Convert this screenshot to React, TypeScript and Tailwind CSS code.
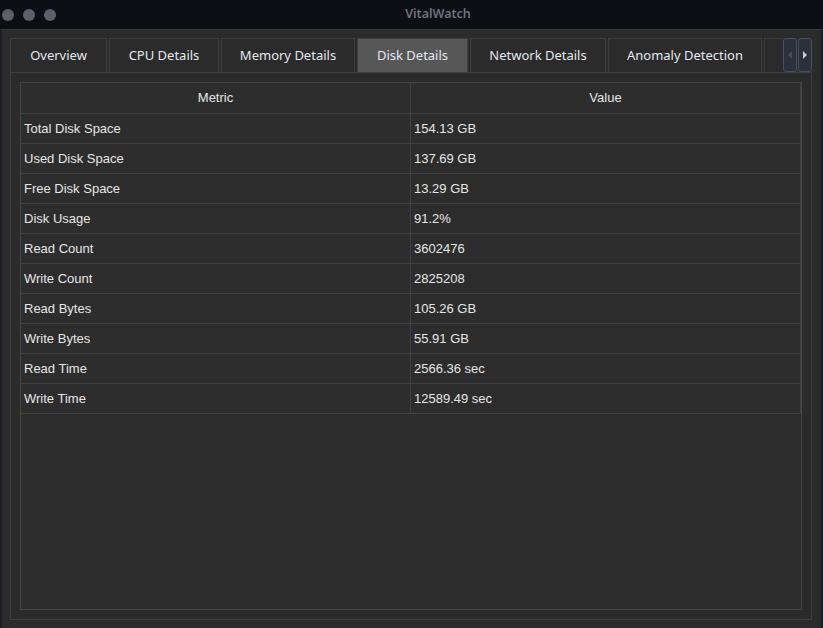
import React from "react";

const tabs = [
  { label: "Overview", w: "w-[97px]" },
  { label: "CPU Details", w: "w-[110px]" },
  { label: "Memory Details", w: "w-[134px]" },
  { label: "Disk Details", w: "w-[111px]", active: true },
  { label: "Network Details", w: "w-[136px]" },
  { label: "Anomaly Detection", w: "w-[154px]" },
  { label: "", w: "w-[60px]" },
];

const rows: [string, string][] = [
  ["Total Disk Space", "154.13 GB"],
  ["Used Disk Space", "137.69 GB"],
  ["Free Disk Space", "13.29 GB"],
  ["Disk Usage", "91.2%"],
  ["Read Count", "3602476"],
  ["Write Count", "2825208"],
  ["Read Bytes", "105.26 GB"],
  ["Write Bytes", "55.91 GB"],
  ["Read Time", "2566.36 sec"],
  ["Write Time", "12589.49 sec"],
];

export default function App() {
  return (
    <div className="w-[823px] h-[628px] flex flex-col bg-[#2b2b2b] overflow-hidden">
      {/* title bar */}
      <div className="h-[29px] shrink-0 bg-[#0d0f15] flex items-center relative">
        <div className="flex gap-[9px] pl-[2px]">
          <span className="w-[12px] h-[12px] rounded-full bg-[#5f5f69]" />
          <span className="w-[12px] h-[12px] rounded-full bg-[#5f5f69]" />
          <span className="w-[12px] h-[12px] rounded-full bg-[#5f5f69]" />
        </div>
        <div className="absolute inset-0 flex items-center justify-center pl-[53px] text-[12.5px] font-semibold text-[#6d7280] font-['Noto_Sans',sans-serif]">
          VitalWatch
        </div>
      </div>

      {/* body */}
      <div className="flex-1 flex flex-col border-t border-[#3a3a3a] border-x-2 border-x-[#1c1d25] pt-[8px] pb-[8px] pl-[8px] pr-[9px]">
        {/* tab bar */}
        <div className="flex h-[34px] shrink-0">
          <div className="flex-1 flex gap-[2px] overflow-hidden">
            {tabs.map((t, i) => (
              <div
                key={i}
                className={`${t.w} shrink-0 h-[34px] flex items-center justify-center border border-b-0 border-[#3f3f3f] text-[13px] text-[#e4e8ef] font-['Noto_Sans',sans-serif] ${
                  t.active ? "bg-[#575757]" : "bg-[#2b2b2b]"
                }`}
              >
                {t.label}
              </div>
            ))}
          </div>
          <div className="flex gap-[1px] w-[29px] shrink-0">
            <div className="w-[14px] h-[34px] rounded-[3px] border border-[#4a4e5e] bg-[#2c2f3c] flex items-center justify-center">
              <span className="w-0 h-0 border-y-[4px] border-y-transparent border-r-[4px] border-r-[#4a4e5c]" />
            </div>
            <div className="w-[14px] h-[34px] rounded-[3px] border border-[#4a4e5e] bg-[#2c2f3c] flex items-center justify-center">
              <span className="w-0 h-0 border-y-[4px] border-y-transparent border-l-[4px] border-l-[#c8ccd6]" />
            </div>
          </div>
        </div>

        {/* tab pane */}
        <div className="flex-1 border border-[#3f3f3f] p-[9px] flex">
          <div className="flex-1 border border-[#454545] bg-[#2d2d2d] font-['Liberation_Sans',Arial,sans-serif] text-[13px] text-[#e6e6e6]">
            <div className="grid grid-cols-[390px_390px] h-[31px] border-b border-[#404040]">
              <div className="flex items-center justify-center border-r border-[#404040]">Metric</div>
              <div className="flex items-center justify-center border-r border-[#404040]">Value</div>
            </div>
            {rows.map(([k, v]) => (
              <div key={k} className="grid grid-cols-[390px_390px] h-[30px] border-b border-[#404040]">
                <div className="flex items-center pl-[3px] border-r border-[#404040]">{k}</div>
                <div className="flex items-center pl-[3px] border-r border-[#404040]">{v}</div>
              </div>
            ))}
          </div>
        </div>
      </div>
    </div>
  );
}
